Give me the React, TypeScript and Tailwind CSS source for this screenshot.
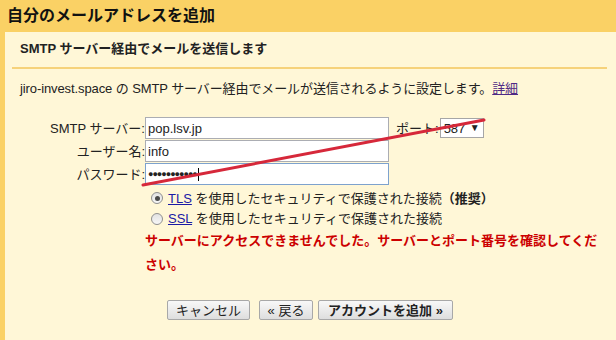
import React from "react";

function Radio({ checked }: { checked?: boolean }) {
  return (
    <div className="w-[12px] h-[12px] rounded-full border border-[#8f8f8f] bg-gradient-to-b from-[#e2e2e2] to-[#f7f7f7] flex items-center justify-center shrink-0">
      {checked ? <div className="w-[5px] h-[5px] rounded-full bg-[#4a4a4a]" /> : null}
    </div>
  );
}

function Btn({ children, w, bold }: { children: React.ReactNode; w: string; bold?: boolean }) {
  return (
    <div
      className={`${w} h-[20px] flex items-center justify-center rounded-[2px] border border-[#a8a8a8] bg-gradient-to-b from-[#f8f8f8] to-[#dedede] text-[13px] leading-none text-[#222] ${bold ? "font-bold" : ""}`}
    >
      {children}
    </div>
  );
}

export default function App() {
  return (
    <div className="relative w-[616px] h-[340px] overflow-hidden bg-[#fad165] font-['Liberation_Sans','Noto_Sans_CJK_JP',sans-serif] text-[#222]">
      <div className="h-[32px] pl-[7px] flex items-center text-[16px] font-bold leading-none text-[#111]">
        自分のメールアドレスを追加
      </div>
      <div className="ml-[5px] h-[308px] bg-[#fff7d7] flex flex-col">
        <div className="h-[35px] pb-[3px] pl-[15px] flex items-center text-[13px] font-bold leading-none">
          SMTP サーバー経由でメールを送信します
        </div>
        <div className="ml-[7px] mr-[9px] h-[2px] bg-[#f6d27a]" />
        <div className="h-[38px] pl-[15px] flex items-center text-[13px] leading-none tracking-[-0.1px]">
          <span>
            jiro-invest.space の SMTP サーバー経由でメールが送信されるように設定します。
            <span className="underline text-[#4f2a85]">詳細</span>
          </span>
        </div>

        <div className="mt-[10px] flex flex-col gap-[1px]">
          <div className="flex items-center h-[22px]">
            <div className="w-[140px] text-right text-[13px] leading-none">SMTP サーバー:</div>
            <div className="w-[244px] h-[22px] bg-white border border-[#abadb3] flex items-center pl-[2px] text-[13px] leading-none">
              pop.lsv.jp
            </div>
            <div className="ml-[7px] text-[13px] leading-none">ポート:</div>
            <div className="ml-[1px] w-[44px] h-[20px] bg-white border border-[#a6a6a6] flex items-center justify-between px-[3px] text-[13px] leading-none">
              <span>587</span>
              <span className="text-[10px]">▼</span>
            </div>
          </div>
          <div className="flex items-center h-[22px]">
            <div className="w-[140px] text-right text-[13px] leading-none">ユーザー名:</div>
            <div className="w-[244px] h-[22px] bg-white border border-[#abadb3] flex items-center pl-[2px] text-[13px] leading-none">
              info
            </div>
          </div>
          <div className="flex items-center h-[22px]">
            <div className="w-[140px] text-right text-[13px] leading-none">パスワード:</div>
            <div className="relative w-[244px] h-[22px] bg-white border border-[#7da2ce] flex items-center pl-[2px] text-[9px] leading-none tracking-[-1px]">
              ●●●●●●●●●●●
              <div className="absolute left-[52px] top-[4px] w-[1px] h-[13px] bg-black" />
            </div>
          </div>
        </div>

        <div className="ml-[146px] mt-[3px] flex flex-col">
          <div className="h-[20px] flex items-center gap-[5px] text-[13px] leading-none">
            <Radio checked />
            <span>
              <span className="underline text-[#1a1aa6]">TLS</span> を使用したセキュリティで保護された接続
              <span className="font-bold">（推奨）</span>
            </span>
          </div>
          <div className="h-[21px] flex items-center gap-[5px] text-[13px] leading-none">
            <Radio />
            <span>
              <span className="underline text-[#1a1aa6]">SSL</span> を使用したセキュリティで保護された接続
            </span>
          </div>
        </div>

        <div className="ml-[140px] w-[462px] text-[13px] font-bold leading-[24px] text-[#cc0000]">
          サーバーにアクセスできませんでした。サーバーとポート番号を確認してください。
        </div>

        <div className="mt-[23px] ml-[162px] flex items-center">
          <Btn w="w-[83px]">キャンセル</Btn>
          <div className="ml-[9px]">
            <Btn w="w-[54px]">« 戻る</Btn>
          </div>
          <div className="ml-[5px]">
            <Btn w="w-[135px]" bold>
              アカウントを追加 »
            </Btn>
          </div>
        </div>
      </div>

      <svg className="absolute left-0 top-0 pointer-events-none" width="616" height="340" viewBox="0 0 616 340">
        <line x1="143" y1="185" x2="484" y2="120" stroke="#d6283a" strokeWidth="3" strokeLinecap="round" />
      </svg>
    </div>
  );
}
